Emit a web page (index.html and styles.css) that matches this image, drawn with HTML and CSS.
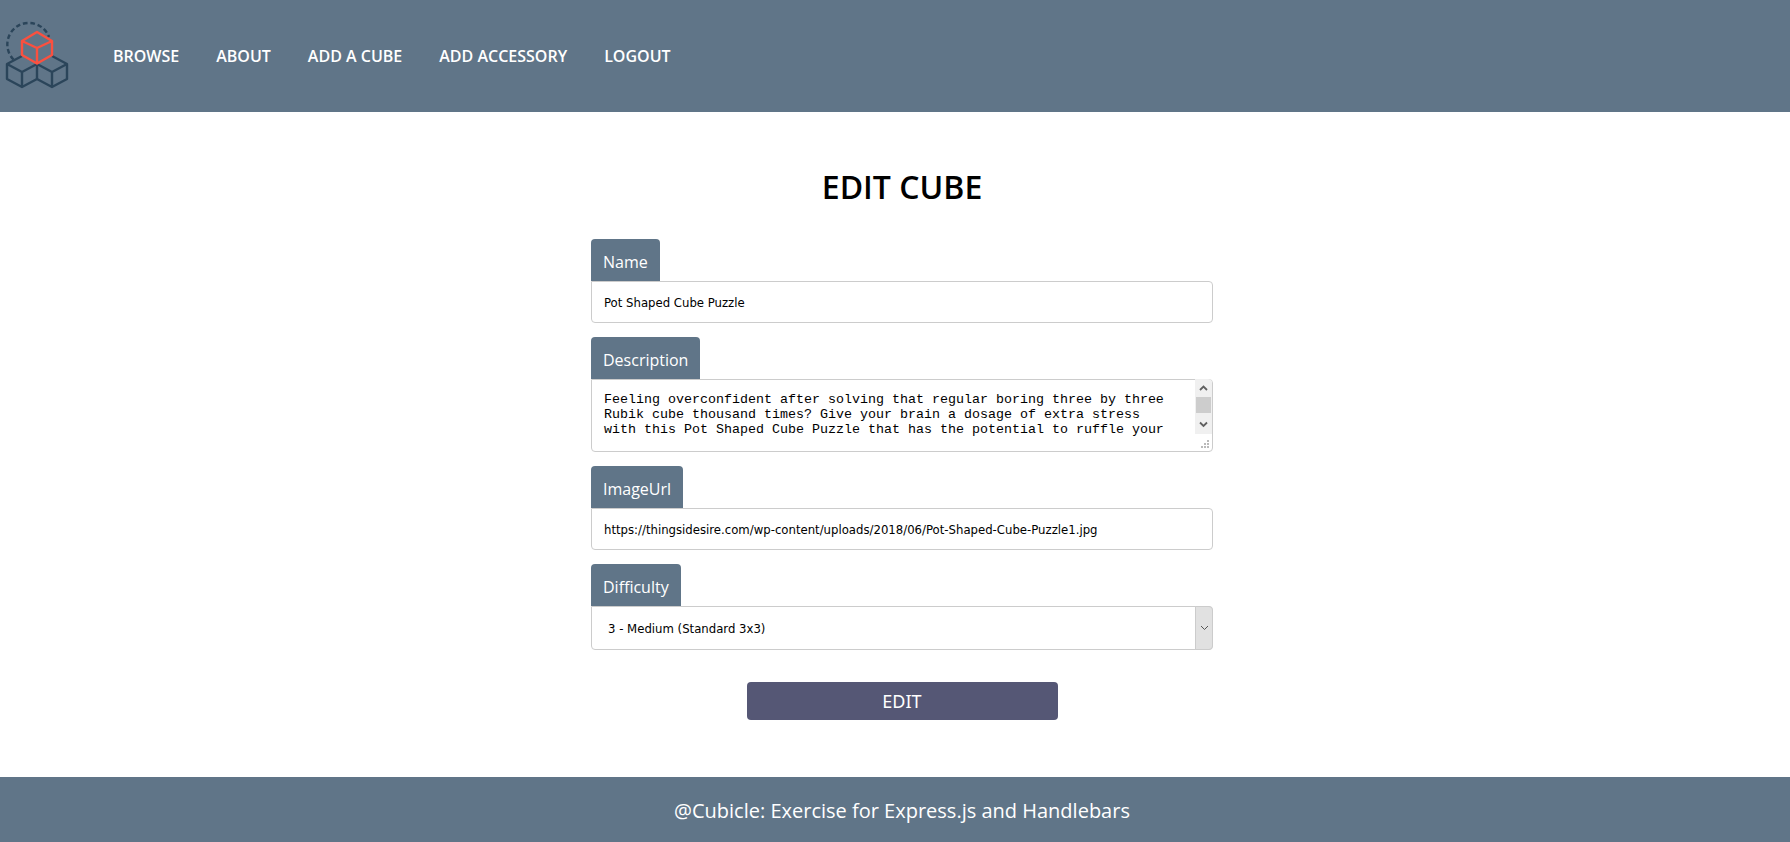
FILE: index.html
```html
<!DOCTYPE html>
<html lang="en">
<head>
  <meta charset="utf-8">
  <meta name="viewport" content="width=device-width, initial-scale=1">
  <title>Edit Cube | Cubicle</title>
  <link rel="stylesheet" href="styles.css">
</head>
<body>
  <header class="site-header">
    <a class="logo" href="#" aria-label="Cubicle home">
      <svg width="72" height="100" viewBox="0 6 72 100" fill="none" stroke-width="2.4" stroke-linejoin="round" aria-hidden="true">
        <path d="M13.500 59.500A21.500 21.500 0 1 1 49 37" stroke="#2b455a" stroke-dasharray="4.600 2.800"/>
        <g stroke="#2b455a">
          <path d="M22 56L7 64V79L22 87L37 79L52 87L67 79V64L52 56"/>
          <path d="M7 64L22 72L37 64L52 72L67 64M22 72V87M37 64V79M52 72V87"/>
        </g>
        <path d="M37 32L52 41V55L37 63.500L22 55V41ZM22 41L37 48L52 41M37 48V63" stroke="#fb503f"/>
      </svg>
    </a>
    <nav class="nav">
      <a href="#">BROWSE</a>
      <a href="#">ABOUT</a>
      <a href="#">ADD A CUBE</a>
      <a href="#">ADD ACCESSORY</a>
      <a href="#">LOGOUT</a>
    </nav>
  </header>

  <main class="content">
    <h1 class="title">EDIT CUBE</h1>
    <form class="cube-form">
      <div class="field">
        <label for="name">Name</label>
        <input class="control" id="name" type="text" value="Pot Shaped Cube Puzzle">
      </div>
      <div class="field">
        <label for="description">Description</label>
        <div class="control-wrap">
          <textarea class="control description" id="description" rows="3">Feeling overconfident after solving that regular boring three by three Rubik cube thousand times? Give your brain a dosage of extra stress with this Pot Shaped Cube Puzzle that has the potential to ruffle your</textarea>
          <svg class="scrollbar" width="17" height="72" viewBox="0 0 17 72" aria-hidden="true">
            <path d="M0 0H13Q17 0 17 4V55H0Z" fill="#f0f0f0"/>
            <path d="M1 18H16V34H1Z" fill="#cdcdcd"/>
            <path d="M5 11L8.500 7.500L12 11M5 43.500L8.500 47L12 43.500" fill="none" stroke="#606060" stroke-width="1.800"/>
            <path d="M12 61h2v2h-2zM9 64h2v2h-2zM12 64h2v2h-2zM6 67h2v2h-2zM9 67h2v2h-2zM12 67h2v2h-2z" fill="#bababa"/>
          </svg>
        </div>
      </div>
      <div class="field">
        <label for="image-url">ImageUrl</label>
        <input class="control" id="image-url" type="text" value="https://thingsidesire.com/wp-content/uploads/2018/06/Pot-Shaped-Cube-Puzzle1.jpg">
      </div>
      <div class="field">
        <label for="difficulty">Difficulty</label>
        <div class="control-wrap">
          <select class="control difficulty" id="difficulty">
            <option>1 - Very Easy</option>
            <option>2 - Easy</option>
            <option selected>3 - Medium (Standard 3x3)</option>
            <option>4 - Intermediate</option>
            <option>5 - Expert</option>
            <option>6 - Hardcore</option>
          </select>
          <span class="arrow" aria-hidden="true">
            <svg width="9" height="6" viewBox="0 0 9 6" fill="none" stroke="#555"><path d="M1 1L4.500 4.500L8 1"/></svg>
          </span>
        </div>
      </div>
      <button class="submit" type="submit">EDIT</button>
    </form>
  </main>

  <footer class="site-footer">@Cubicle: Exercise for Express.js and Handlebars</footer>
</body>
</html>
```
FILE: styles.css
```css
:root {
  --slate: #607588;
  --border: #ccc;
  --offset: 14px;
}

* {
  box-sizing: border-box;
}

body {
  margin: 0;
  min-height: 100vh;
  display: flex;
  flex-direction: column;
  background: #fff;
  color: #000;
  font-family: "Open Sans", "Noto Sans", sans-serif;
}

.site-header {
  display: flex;
  align-items: center;
  gap: 41px;
  padding: 6px 0;
  background: var(--slate);
}

.logo,
.logo svg {
  display: block;
}

.nav {
  display: flex;
  gap: 37px;
}

.nav a {
  color: #fff;
  font-size: 16px;
  font-weight: 600;
  line-height: 24px;
  text-decoration: none;
}

.content {
  flex: 1;
  display: flex;
  flex-direction: column;
  align-items: center;
  padding: 53px 0 55px var(--offset);
}

.title {
  margin: 0 0 30px;
  font-size: 32px;
  font-weight: 600;
  line-height: 44px;
}

.cube-form {
  width: 100%;
  max-width: 622px;
  display: flex;
  flex-direction: column;
  gap: 14px;
}

.field {
  display: flex;
  flex-direction: column;
  align-items: flex-start;
}

.field label {
  padding: 12px 12px 8px;
  border-radius: 4px 4px 0 0;
  background: var(--slate);
  color: #fff;
  font-size: 16px;
  line-height: 22px;
}

.control {
  display: block;
  width: 100%;
  margin: 0;
  padding: 12px;
  border: 1px solid var(--border);
  border-radius: 0 4px 4px 4px;
  background: #fff;
  color: #000;
}

input.control,
select.control {
  height: 42px;
  font-family: Tahoma, "DejaVu Sans Condensed", sans-serif;
  font-size: 13px;
}

.control-wrap {
  position: relative;
  width: 100%;
}

.description {
  height: 73px;
  padding-right: 40px;
  font-family: "Liberation Mono", monospace;
  line-height: 15px;
  resize: none;
  scrollbar-width: none;
}

.scrollbar {
  position: absolute;
  top: 0;
  right: 1px;
  pointer-events: none;
}

select.difficulty {
  height: 44px;
  padding-left: 16px;
  appearance: none;
}

.arrow {
  position: absolute;
  top: 0;
  right: 0;
  bottom: 0;
  width: 18px;
  display: flex;
  align-items: center;
  justify-content: center;
  border: 1px solid var(--border);
  border-radius: 0 4px 4px 0;
  background: #e1e1e1;
  pointer-events: none;
}

.submit {
  align-self: center;
  width: 50%;
  margin-top: 18px;
  padding: 6px;
  border: 0;
  border-radius: 4px;
  background: #555775;
  color: #fff;
  font-family: "Noto Sans", sans-serif;
  font-size: 18px;
  line-height: 26px;
}

.site-footer {
  padding: 20px 0 18px var(--offset);
  background: var(--slate);
  color: #fff;
  font-size: 20px;
  line-height: 27px;
  text-align: center;
}
```
